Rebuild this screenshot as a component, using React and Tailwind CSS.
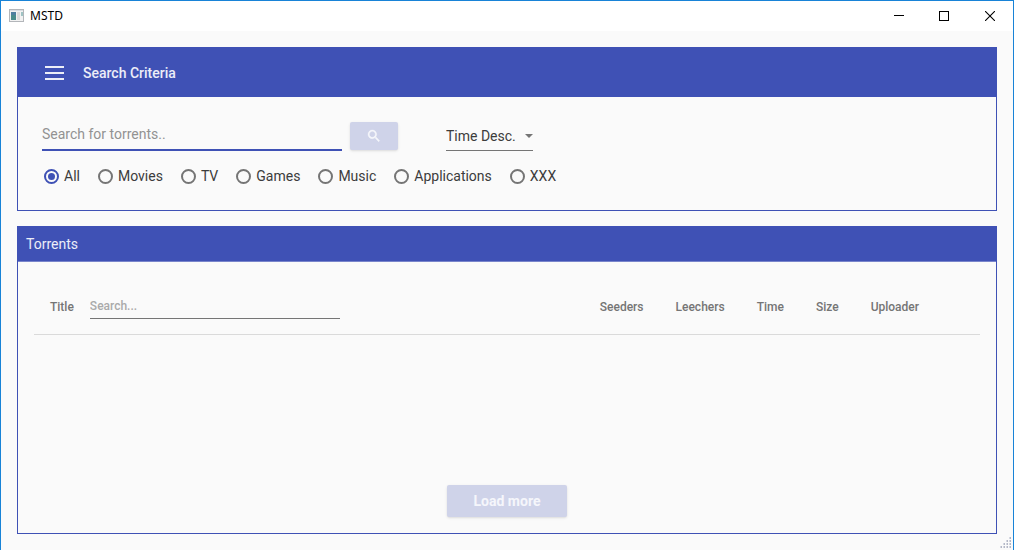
import { useState } from "react";

const categories = ["All", "Movies", "TV", "Games", "Music", "Applications", "XXX"];
const columns = ["Seeders", "Leechers", "Time", "Size", "Uploader"];

function TitleBar() {
  return (
    <header className="flex h-[30px] shrink-0 items-center bg-white pl-2 text-black">
      <svg className="mb-[2px] h-[13px] w-[15px]" viewBox="0 0 15 13" aria-hidden="true">
        <rect x="0.5" y="0.5" width="14" height="12" fill="#f2f2f2" stroke="#b3b6ba" />
        <rect x="1" y="1" width="13" height="1" fill="#d9dde2" />
        <rect x="2" y="3" width="5" height="8" fill="#4a8c8c" />
        <rect x="2" y="3" width="5" height="3" fill="#4f7fa0" />
        <rect x="8" y="3" width="3" height="8" fill="#dcdcdc" />
        <rect x="12" y="3" width="2" height="4" fill="#9fc3c4" />
      </svg>
      <h1 className="ml-[6px] flex-1 font-['Noto_Sans',sans-serif] text-xs">MSTD</h1>
      <button type="button" aria-label="Minimize" className="flex h-full w-[45px] items-center justify-center">
        <svg className="h-[10px] w-[10px]" viewBox="0 0 10 10" shapeRendering="crispEdges">
          <path d="M0 4.5h10" stroke="#000" />
        </svg>
      </button>
      <button type="button" aria-label="Maximize" className="flex h-full w-[46px] items-center justify-center">
        <svg className="h-[10px] w-[10px]" viewBox="0 0 10 10" shapeRendering="crispEdges">
          <rect x="0.5" y="0.5" width="9" height="9" fill="none" stroke="#000" />
        </svg>
      </button>
      <button type="button" aria-label="Close" className="flex h-full w-[46px] items-center justify-center">
        <svg className="h-[10px] w-[10px]" viewBox="0 0 10 10">
          <path d="M0 0L10 10M10 0L0 10" stroke="#000" strokeWidth="1.1" />
        </svg>
      </button>
    </header>
  );
}

function SearchPanel() {
  const [category, setCategory] = useState("All");
  return (
    <section className="border border-[#3f51b5] pb-6">
      <div className="flex h-[49px] items-center bg-[#3f51b5] pl-[27px] text-white/90">
        <button type="button" aria-label="Menu">
          <svg className="h-[14px] w-[19px]" viewBox="0 0 19 14" aria-hidden="true">
            <path d="M0 1h19M0 7h19M0 13h19" stroke="currentColor" strokeWidth="2" />
          </svg>
        </button>
        <h2 className="ml-[19px] text-sm font-medium">Search Criteria</h2>
      </div>
      <form className="px-6 pt-6" onSubmit={(e) => e.preventDefault()}>
        <div className="flex items-start">
          <input
            type="text"
            aria-label="Search for torrents"
            placeholder="Search for torrents.."
            className="h-[30px] w-[300px] border-b-2 border-[#3f51b5] bg-transparent pb-[2px] text-sm outline-none placeholder:text-[#929292]"
          />
          <button
            type="submit"
            disabled
            aria-label="Search"
            className="mt-px ml-2 flex h-7 w-12 items-center justify-center rounded-xs bg-[#cfd3e9] text-white/80 shadow-sm"
          >
            <svg className="h-4 w-4" viewBox="0 0 24 24" fill="currentColor" aria-hidden="true">
              <path
                d="M15.5 14h-.79l-.28-.27A6.471 6.471 0 0 0 16 9.5 6.5 6.5 0 1 0 9.5 16c1.61 0 3.09-.59 4.23-1.57l.27.28v.79l5 4.99L20.49 19l-4.99-5zm-6 0C7.01 14 5 11.99 5 9.5S7.01 5 9.5 5 14 7.01 14 9.5 11.99 14 9.5 14z"
                stroke="currentColor"
                strokeWidth="0.5"
              />
            </svg>
          </button>
          <div className="relative ml-12">
            <select
              aria-label="Sort order"
              className="h-[30px] w-[87px] appearance-none border-b border-[#757575] bg-transparent text-sm text-[#3c3c3c] outline-none"
            >
              <option>Time Desc.</option>
            </select>
            <svg className="pointer-events-none absolute top-[13px] right-0 h-1 w-2" viewBox="0 0 8 4" aria-hidden="true">
              <path d="M0 0h8L4 4z" fill="#757575" />
            </svg>
          </div>
        </div>
        <fieldset className="mt-[15px] flex flex-wrap gap-x-[18px] pl-[2px]">
          {categories.map((name) => (
            <label key={name} className="flex items-center gap-[5px] text-sm text-[#3c3c3c]">
              <input
                type="radio"
                name="category"
                value={name}
                checked={category === name}
                onChange={() => setCategory(name)}
                className="h-[15px] w-[15px] appearance-none rounded-full border-2 border-[#757575] bg-clip-content p-[2px] checked:border-[#3f51b5] checked:bg-[#3f51b5]"
              />
              {name}
            </label>
          ))}
        </fieldset>
      </form>
    </section>
  );
}

function TorrentsPanel() {
  return (
    <section className="mt-[15px] flex flex-1 flex-col border border-[#3f51b5]">
      <h2 className="flex h-[35px] items-center border-b border-[#7985cb] bg-[#3f51b5] pl-2 text-sm text-white/90">
        Torrents
      </h2>
      <div className="flex flex-1 flex-col px-4 pb-4">
        <table className="w-full text-xs text-[#757575]">
          <thead>
            <tr className="h-[72px] border-b border-[#dadada] text-left">
              <th className="px-4 pt-[18px] font-medium">
                <div className="flex items-center gap-4">
                  <label htmlFor="title-filter">Title</label>
                  <input
                    id="title-filter"
                    type="text"
                    placeholder="Search..."
                    className="h-6 w-[250px] border-b border-[#757575] bg-transparent pb-px font-medium outline-none placeholder:text-[#aaaaaa]"
                  />
                </div>
              </th>
              {columns.map((name) => (
                <th key={name} scope="col" className="w-px px-4 pt-[18px] font-medium">
                  {name}
                </th>
              ))}
              <td className="w-[45px]" />
            </tr>
          </thead>
        </table>
        <button
          type="button"
          disabled
          className="mx-auto mt-auto h-8 w-[120px] rounded-xs bg-[#cfd3e9] text-sm font-bold text-white/80 shadow-sm"
        >
          Load more
        </button>
      </div>
    </section>
  );
}

function ResizeGrip() {
  const dots = [[9, 0], [6, 3], [9, 3], [3, 6], [6, 6], [9, 6], [0, 9], [3, 9], [6, 9], [9, 9]];
  return (
    <svg className="absolute right-[2px] bottom-[2px] h-[11px] w-[11px]" viewBox="0 0 11 11" aria-hidden="true">
      {dots.map(([x, y]) => (
        <g key={`${x}-${y}`}>
          <rect x={x} y={y} width="2" height="2" fill="#d5d8e2" />
          <rect x={x + 1} y={y} width="1" height="2" fill="#b4b8c6" />
        </g>
      ))}
    </svg>
  );
}

export default function App() {
  return (
    <div className="relative flex min-h-screen flex-col border border-b-0 border-[#1883d7] bg-[#fafafa] font-['Roboto',sans-serif]">
      <TitleBar />
      <main className="flex flex-1 flex-col p-4">
        <SearchPanel />
        <TorrentsPanel />
      </main>
      <ResizeGrip />
    </div>
  );
}
